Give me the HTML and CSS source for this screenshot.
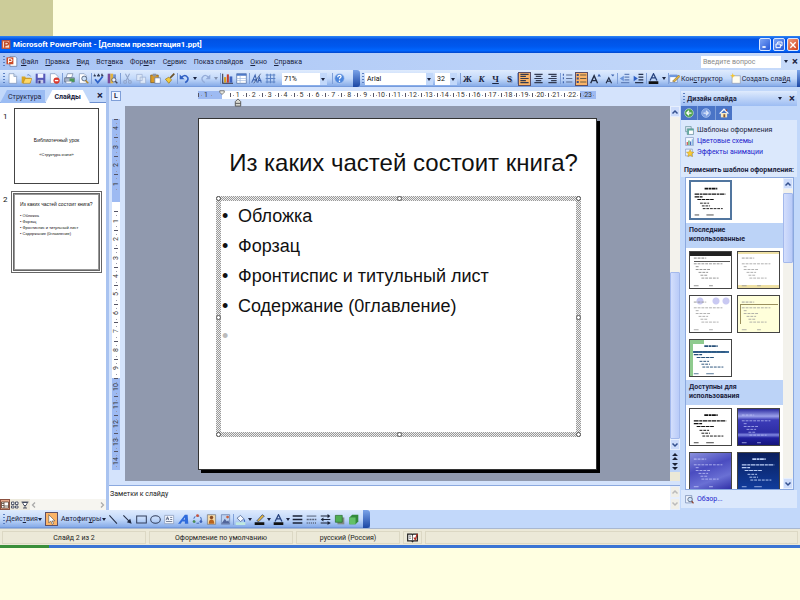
FILE: index.html
```html
<!DOCTYPE html>
<html lang="ru">
<head>
<meta charset="utf-8">
<title>Microsoft PowerPoint - [Делаем презентация1.ppt]</title>
<link rel="stylesheet" href="styles.css">
</head>
<body>
<svg class="defs" aria-hidden="true">
  <defs>
    <symbol id="i-new" viewBox="0 0 16 16"><path d="M3 1h7l4 4v10H3z" fill="#fff" stroke="#7d93b8"/><path d="M10 1v4h4" fill="#cfdcf0" stroke="#7d93b8"/></symbol>
    <symbol id="i-open" viewBox="0 0 16 16"><path d="M1 5h5l1 2h7v8H1z" fill="#d9a520"/><path d="M3 15l3-7h10l-3 7z" fill="#ffd968" stroke="#a87c14" stroke-width=".7"/><path d="M9 3q3-2 5 2" stroke="#456bb5" fill="none"/></symbol>
    <symbol id="i-save" viewBox="0 0 16 16"><path d="M1 1h14v14H1z" fill="#5558b8"/><path d="M4 1h8v6H4z" fill="#f2f4ff"/><path d="M4 10h8v5H4z" fill="#c5c9e8"/><path d="M5 11h3v4H5z" fill="#39397d"/></symbol>
    <symbol id="i-perm" viewBox="0 0 16 16"><path d="M2 1h7l4 4v10H2z" fill="#fff" stroke="#7d93b8"/><circle cx="11" cy="11" r="4.5" fill="#d9372b"/><path d="M8.500 10h5v2h-5z" fill="#fff"/></symbol>
    <symbol id="i-print" viewBox="0 0 16 16"><path d="M5 1h8l-2 6H3z" fill="#fff" stroke="#6b7d9c"/><path d="M1 7h14v6H1z" fill="#a9b5c9" stroke="#53617c"/><path d="M8 8h7v5H8z" fill="#4b9a55"/><path d="M3 12h8v3H3z" fill="#fff" stroke="#6b7d9c" stroke-width=".6"/></symbol>
    <symbol id="i-preview" viewBox="0 0 16 16"><path d="M2 1h7l3 3v11H2z" fill="#fff" stroke="#7d93b8"/><circle cx="9" cy="8" r="3.500" fill="#cfe4fa" stroke="#44546e" stroke-width="1.200"/><path d="M11 11l4 4" stroke="#b58522" stroke-width="2"/></symbol>
    <symbol id="i-spell" viewBox="0 0 16 16"><path d="M1 4h3M6 4h4M12 4h3M2 2h1M7 2h2M12 2h2" stroke="#333c55" stroke-width="2"/><path d="M3 9l4 5 7-9" fill="none" stroke="#2f63c9" stroke-width="2.500"/></symbol>
    <symbol id="i-research" viewBox="0 0 16 16"><path d="M1 1h4v14H1z" fill="#7c4a9a"/><path d="M5 1h4v14H5z" fill="#e0b440"/><path d="M9 2h4v9H9z" fill="#6e8fd0"/><circle cx="10" cy="10" r="3" fill="#e8f2ff" stroke="#445"/><path d="M12 12l3 3" stroke="#445" stroke-width="2"/></symbol>
    <symbol id="i-cut" viewBox="0 0 16 16"><path d="M5 1l5 10M11 1L6 11" stroke="#8fa3c8" stroke-width="1.500"/><circle cx="4.500" cy="13" r="2" fill="none" stroke="#8fa3c8" stroke-width="1.500"/><circle cx="11.500" cy="13" r="2" fill="none" stroke="#8fa3c8" stroke-width="1.500"/></symbol>
    <symbol id="i-copy" viewBox="0 0 16 16"><path d="M1 2h8v9H1zM6 6h8v9H6z" fill="#dde8f8" stroke="#9aaed0"/></symbol>
    <symbol id="i-paste" viewBox="0 0 16 16"><path d="M1 3h11v11H1z" fill="#d99a27" stroke="#80570f"/><path d="M4 1h5v4H4z" fill="#8c94a5"/><path d="M7 7h8v8H7z" fill="#fff" stroke="#5a76b0"/></symbol>
    <symbol id="i-brush" viewBox="0 0 16 16"><path d="M15 1l-6 6" stroke="#6b532a" stroke-width="2.500"/><path d="M2 9l5-3 4 4-4 5z" fill="#f2c93b" stroke="#977517"/></symbol>
    <symbol id="i-undo" viewBox="0 0 16 16"><path d="M3 7q6-7 10 0 1 4-4 7" fill="none" stroke="#2f5fc4" stroke-width="2.200"/><path d="M1 2v7h7z" fill="#2f5fc4"/></symbol>
    <symbol id="i-redo" viewBox="0 0 16 16"><path d="M13 7q-6-7-10 0-1 4 4 7" fill="none" stroke="#93abd8" stroke-width="2"/><path d="M15 2v7H8z" fill="#93abd8"/></symbol>
    <symbol id="i-chart" viewBox="0 0 16 16"><path d="M1 1v14h15" stroke="#334" fill="none" stroke-width="1.500"/><path d="M3 6h3v8H3z" fill="#d8a11e"/><path d="M7 2h3v12H7z" fill="#c63c2e"/><path d="M11 5h4v9h-4z" fill="#3f62bd"/></symbol>
    <symbol id="i-table" viewBox="0 0 16 16"><path d="M1 1h14v14H1z" fill="#fff" stroke="#49679f"/><path d="M1 1h14v3H1z" fill="#4e79c7"/><path d="M1 8h14M1 11h14M6 4v11" stroke="#9fb8df"/></symbol>
    <symbol id="i-expand" viewBox="0 0 16 16"><path d="M1 14L6 3l3 11M3 10h5" fill="none" stroke="#3b61ad" stroke-width="1.500"/><path d="M14 1L4 15" stroke="#2b3e66"/><path d="M10 14l2-8 3 8M10 11h5" fill="none" stroke="#3b61ad" stroke-width="1.500"/></symbol>
    <symbol id="i-grid" viewBox="0 0 16 16"><path d="M1 3h14M1 8h14M1 13h14M3 1v14M8 1v14M13 1v14" stroke="#5d84c6" stroke-width="1.500"/></symbol>
    <symbol id="i-help" viewBox="0 0 16 16"><circle cx="8" cy="8" r="7" fill="#4c86dd" stroke="#b7cdf0"/><path d="M5.500 6q0-3 3-2.500 3 1 1 3-1.500 1-1.500 2.500M8 11v2" fill="none" stroke="#fff" stroke-width="1.800"/></symbol>
    <symbol id="i-left" viewBox="0 0 16 16"><path d="M2 2h12M2 5h8M2 8h12M2 11h8M2 14h12" stroke="#333b52" stroke-width="1.700"/></symbol>
    <symbol id="i-center" viewBox="0 0 16 16"><path d="M2 2h12M4 5h8M2 8h12M4 11h8M2 14h12" stroke="#333b52" stroke-width="1.700"/></symbol>
    <symbol id="i-right" viewBox="0 0 16 16"><path d="M2 2h12M6 5h8M2 8h12M6 11h8M2 14h12" stroke="#333b52" stroke-width="1.700"/></symbol>
    <symbol id="i-num" viewBox="0 0 16 16"><path d="M2 1v3M2 6v3M2 12v3" stroke="#3b61ad" stroke-width="1.600"/><path d="M6 3h9M6 8h9M6 13h9" stroke="#5c6f94" stroke-width="1.500"/></symbol>
    <symbol id="i-bul" viewBox="0 0 16 16"><path d="M1 3h3M1 8h3M1 13h3" stroke="#394c86" stroke-width="3"/><path d="M6 3h9M6 8h9M6 13h9" stroke="#6d5c43" stroke-width="1.500"/></symbol>
    <symbol id="i-big" viewBox="0 0 16 16"><path d="M1 15L6 4l5 11M3 11h6" fill="none" stroke="#222c44" stroke-width="2"/><path d="M11 5l2-4 3 4z" fill="#3b61ad"/></symbol>
    <symbol id="i-small" viewBox="0 0 16 16"><path d="M3 15l4-8 4 8M4 12h6" fill="none" stroke="#222c44" stroke-width="1.700"/><path d="M10 2h5l-2 3z" fill="#3b61ad"/></symbol>
    <symbol id="i-outdent" viewBox="0 0 16 16"><path d="M8 2h7M8 6h7M8 10h7M3 14h12" stroke="#6482bb" stroke-width="1.500"/><path d="M7 4v8L1 8z" fill="#6a93da"/></symbol>
    <symbol id="i-indent" viewBox="0 0 16 16"><path d="M8 2h7M8 6h7M8 10h7M3 14h12" stroke="#26324e" stroke-width="1.600"/><path d="M1 4v8l6-4z" fill="#2f5fc4"/></symbol>
    <symbol id="i-color" viewBox="0 0 16 16"><path d="M3 11L8 1l5 10M5 7h6" fill="none" stroke="#27427d" stroke-width="1.800"/><path d="M1 12h14v4H1z" fill="#111"/></symbol>
    <symbol id="i-design" viewBox="0 0 16 16"><path d="M1 3h11v11H1z" fill="#fff" stroke="#5c80c4"/><path d="M1 3h11v3H1z" fill="#6c96df"/><path d="M5 12L14 3l2 2-8 8z" fill="#e6b63d" stroke="#55503c" stroke-width=".7"/></symbol>
    <symbol id="i-slide" viewBox="0 0 16 16"><path d="M3 4h12v11H3z" fill="#fffdf0" stroke="#8a97b5"/><path d="M4 0l1 3 3 1-3 1-1 3-1-3-3-1 3-1z" fill="#f5c52c"/></symbol>
    <symbol id="i-app" viewBox="0 0 16 16"><path d="M1 1h14v14H1z" fill="#d2542a"/><path d="M3 3h10v10H3z" fill="#f7dccb"/><path d="M6 13V4h3q3 0 3 2.500T9 9H6" fill="none" stroke="#b93b17" stroke-width="2"/></symbol>
    <symbol id="i-doc" viewBox="0 0 16 16"><path d="M5 1h8l2 2v12H5z" fill="#fff" stroke="#5a6d94"/><path d="M0 2h10v10H0z" fill="#cc4b27"/><path d="M3 11V4h2q3 0 3 2T5 8H3" fill="none" stroke="#fff" stroke-width="1.500"/></symbol>
    <symbol id="i-cursor" viewBox="0 0 16 16"><path d="M4 1v12l3-3 2 5 2-1-2-4h4z" fill="#fff" stroke="#444" stroke-width=".8"/></symbol>
    <symbol id="i-line" viewBox="0 0 16 16"><path d="M2 2l11 12" stroke="#222c44" stroke-width="1.500"/></symbol>
    <symbol id="i-arrow" viewBox="0 0 16 16"><path d="M2 2l9 9" stroke="#222c44" stroke-width="1.500"/><path d="M14 14l-7-2 5-5z" fill="#222c44"/></symbol>
    <symbol id="i-rect" viewBox="0 0 16 16"><path d="M1 3h14v10H1z" fill="none" stroke="#333f5c" stroke-width="1.500"/></symbol>
    <symbol id="i-oval" viewBox="0 0 16 16"><ellipse cx="8" cy="8" rx="7" ry="5.500" fill="none" stroke="#333f5c" stroke-width="1.500"/></symbol>
    <symbol id="i-textbox" viewBox="0 0 16 16"><path d="M1 2h13v12H1z" fill="#f5f8ff" stroke="#8494b5"/><path d="M3 9l2-5 2 5M4 7h3M9 5h3M9 8h3M3 11h9" fill="none" stroke="#384768"/></symbol>
    <symbol id="i-wordart" viewBox="0 0 16 16"><path d="M0 14L10 1h4l1 13h-5v-3H6l-2 3z" fill="#2f6bdc"/><path d="M8 8h2V5z" fill="#dce8fc"/></symbol>
    <symbol id="i-diagram" viewBox="0 0 16 16"><circle cx="8" cy="8" r="5.500" fill="none" stroke="#4a6fb8" stroke-width="1.500" stroke-dasharray="4 2"/><circle cx="8" cy="2.500" r="2" fill="#c7523b"/><circle cx="3" cy="11" r="2" fill="#4a8f52"/><circle cx="13" cy="11" r="2" fill="#3d61b5"/></symbol>
    <symbol id="i-clip" viewBox="0 0 16 16"><path d="M2 1h12v14H2z" fill="#f4d9a7" stroke="#6b727f"/><circle cx="8" cy="5" r="2.500" fill="#8a4c23"/><path d="M4 14q0-6 4-6t4 6z" fill="#b8641f"/></symbol>
    <symbol id="i-pic" viewBox="0 0 16 16"><path d="M2 1h12v14H2z" fill="#bcd2f2" stroke="#6278a6"/><path d="M2 14l5-7 3 4 2-2 2 5z" fill="#51659b"/><circle cx="11" cy="4.500" r="2" fill="#c8603e"/></symbol>
    <symbol id="i-fill" viewBox="0 0 16 16"><path d="M3 6l5-4 5 5-5 4z" fill="#f4f8ff" stroke="#3c5180"/><path d="M13 7q3 3 1 5-2-1-1-5" fill="#3769c4"/><path d="M1 12h14v4H1z" fill="#bfe8e0"/></symbol>
    <symbol id="i-pen" viewBox="0 0 16 16"><path d="M4 10L12 1l3 2-8 8z" fill="#e6b63d" stroke="#2e4170"/><path d="M1 12h14v4H1z" fill="#111"/></symbol>
    <symbol id="i-weight" viewBox="0 0 16 16"><path d="M1 3h14M1 8h14M1 13h14" stroke="#1a2236" stroke-width="2.200"/></symbol>
    <symbol id="i-dash" viewBox="0 0 16 16"><path d="M1 3h14" stroke="#58637a" stroke-width="1.500"/><path d="M1 8h14" stroke="#58637a" stroke-width="2" stroke-dasharray="3 1"/><path d="M1 13h14" stroke="#58637a" stroke-width="2" stroke-dasharray="1.500 1.500"/></symbol>
    <symbol id="i-arrows" viewBox="0 0 16 16"><path d="M1 3h12M3 8h12M1 13h14" stroke="#1a2236" stroke-width="1.500"/><path d="M11 0l4 3-4 3zM5 5L1 8l4 3zM11 10l4 3-4 3z" fill="#1a2236"/></symbol>
    <symbol id="i-shadow" viewBox="0 0 16 16"><path d="M5 5h10v10H5z" fill="#7f8a86"/><path d="M2 2h10v10H2z" fill="#4fae52" stroke="#27682c"/></symbol>
    <symbol id="i-cube" viewBox="0 0 16 16"><path d="M2 5l4-4h9v10l-4 4H2z" fill="#338a3b"/><path d="M2 5h9v10H2z" fill="#63c167"/></symbol>
    <symbol id="i-home" viewBox="0 0 16 16"><path d="M3 8h10v7H3z" fill="#f7e7c2"/><path d="M1 9l7-7 7 7" fill="none" stroke="#fff" stroke-width="2"/><path d="M11 2h2v3h-2z" fill="#b54b31"/><path d="M7 10h3v5H7z" fill="#8d5a2a"/></symbol>
    <symbol id="i-back" viewBox="0 0 16 16"><circle cx="8" cy="8" r="7" fill="#4fa350" stroke="#cfe4d5"/><path d="M12 8H5M8 4.500L4.500 8 8 11.500" fill="none" stroke="#fff" stroke-width="2"/></symbol>
    <symbol id="i-fwd" viewBox="0 0 16 16"><circle cx="8" cy="8" r="7" fill="#7ea0e2" stroke="#b8cdf3"/><path d="M4 8h7M8 4.500L11.500 8 8 11.500" fill="none" stroke="#dfe9fb" stroke-width="2"/></symbol>
    <symbol id="i-tpl" viewBox="0 0 16 16"><path d="M1 1h10v9H1z" fill="#dceaf5" stroke="#4c7d86"/><path d="M4 5h11v10H4z" fill="#fff" stroke="#3d6e80"/><path d="M4 5h11v3H4zM4 8h3v7H4z" fill="#5fa79c"/></symbol>
    <symbol id="i-scheme" viewBox="0 0 16 16"><path d="M1 1h14v14H1z" fill="#f4f8ff" stroke="#6c87b8"/><path d="M3 9h2v5H3z" fill="#c9433a"/><path d="M6 6h2v8H6z" fill="#3e9e55"/><path d="M9 8h2v6H9z" fill="#3f62bd"/><path d="M12 4h2v10h-2z" fill="#7bb4de"/></symbol>
    <symbol id="i-anim" viewBox="0 0 16 16"><path d="M1 2h12v12H1z" fill="#e9f1fd" stroke="#6c87b8"/><path d="M9 3l2 4 5 .5-4 3 1.500 5L9 13l-4 2.500L6 10.500 2.500 7.500 7 7z" fill="#f8cb36" stroke="#a87d14" stroke-width=".7"/></symbol>
    <symbol id="i-browse" viewBox="0 0 16 16"><path d="M1 1h11v13H1z" fill="#eef4ff" stroke="#56709f"/><circle cx="9" cy="8" r="4" fill="#cfe4fa" stroke="#44546e" stroke-width="1.300"/><path d="M12 11l3 4" stroke="#8c3d2a" stroke-width="2.200"/></symbol>
    <symbol id="i-book" viewBox="0 0 16 16"><path d="M1 3h6l1 1 1-1h6v10H9l-1 1-1-1H1z" fill="#fff" stroke="#222" stroke-width="1.800"/><path d="M8 4v9M3 6h3M3 9h3" stroke="#333"/><path d="M10 8l2 3 3-8" fill="none" stroke="#b52d20" stroke-width="1.800"/></symbol>
    <symbol id="i-vnormal" viewBox="0 0 16 16"><path d="M1 2h14v12H1z" fill="#fff" stroke="#50382a" stroke-width="1.500"/><path d="M6 2v12M2 5h4M2 9h4M6 10h9" stroke="#50382a" stroke-width="1.500"/></symbol>
    <symbol id="i-vsort" viewBox="0 0 16 16"><path d="M1 2h5v5H1zM9 2h5v5H9zM1 10h5v4H1zM9 10h5v4H9z" fill="#fff" stroke="#222c44" stroke-width="1.500"/></symbol>
    <symbol id="i-vshow" viewBox="0 0 16 16"><path d="M1 2h14M3 3h10l-3 6H6z" fill="#fff" stroke="#222c44" stroke-width="1.500"/><path d="M8 9v5M4 14h8" stroke="#222c44" stroke-width="1.500"/></symbol>
    <symbol id="i-up" viewBox="0 0 8 8"><path d="M1.500 5.500L4 3l2.500 2.500" fill="none" stroke="currentColor" stroke-width="1.500"/></symbol>
    <symbol id="i-down" viewBox="0 0 8 8"><path d="M1.500 2.500L4 5l2.500-2.500" fill="none" stroke="currentColor" stroke-width="1.500"/></symbol>
    <symbol id="i-prev" viewBox="0 0 8 8"><path d="M1 4l3-3 3 3zM1 8l3-3 3 3z" fill="#1a2236"/></symbol>
    <symbol id="i-next" viewBox="0 0 8 8"><path d="M1 0l3 3 3-3zM1 4l3 3 3-3z" fill="#1a2236"/></symbol>
    <symbol id="i-lt" viewBox="0 0 8 8"><path d="M5 1.500L2.500 4 5 6.500" fill="none" stroke="currentColor" stroke-width="1.300"/></symbol>
    <symbol id="i-gt" viewBox="0 0 8 8"><path d="M3 1.500L5.500 4 3 6.500" fill="none" stroke="currentColor" stroke-width="1.300"/></symbol>
    <symbol id="t-text" viewBox="0 0 43 37"><path d="M15 6h14" stroke="currentColor" stroke-width="2" stroke-dasharray="4 .6 3 .5"/><path d="M4 12h34M4 15h9" stroke="currentColor" stroke-width="1.400" stroke-dasharray="5 .7 3 .6"/><path d="M7 18h18" stroke="currentColor" stroke-width="1.200" stroke-dasharray="4 .7"/><path d="M10 22h10M12 25h9M13 28h22" stroke="currentColor" stroke-dasharray="3 1"/><path d="M4 35h5M17 35h8" stroke="currentColor" stroke-width=".8"/></symbol>
    <symbol id="t-lines" viewBox="0 0 43 37"><path d="M4 6h13" stroke="currentColor" stroke-dasharray="3 1"/><path d="M4 12h30M6 15h4M6 18h16M9 21h10M11 24h8M12 27h18" stroke="currentColor" stroke-width=".8" stroke-dasharray="3 1"/><path d="M4 35h5M20 35h4" stroke="currentColor" stroke-width=".8"/></symbol>
  </defs>
</svg>

<header class="banner"><div class="banner-block"></div></header>

<main class="app">
  <div class="titlebar">
    <svg class="icon"><use href="#i-app"/></svg>
    <h1>Microsoft PowerPoint - [Делаем презентация1.ppt]</h1>
    <button class="win" aria-label="Свернуть"><svg viewBox="0 0 12 12"><path d="M2 9h5" stroke="#fff" stroke-width="2.500"/></svg></button>
    <button class="win" aria-label="Восстановить"><svg viewBox="0 0 12 12"><path d="M4 4V1.500h6.500V7H8M1.500 4.500H8V10H1.500z" fill="none" stroke="#fff" stroke-width="1.500"/></svg></button>
    <button class="win close" aria-label="Закрыть"><svg viewBox="0 0 12 12"><path d="M2 2l8 8M10 2l-8 8" stroke="#fff" stroke-width="2"/></svg></button>
  </div>

  <nav class="menubar">
    <span class="grip"></span>
    <svg class="icon"><use href="#i-doc"/></svg>
    <button><u>Ф</u>айл</button><button><u>П</u>равка</button><button><u>В</u>ид</button><button>Вст<u>а</u>вка</button><button>Фор<u>м</u>ат</button><button>С<u>е</u>рвис</button><button>Показ слай<u>д</u>ов</button><button><u>О</u>кно</button><button><u>С</u>правка</button>
    <input class="ask" type="text" placeholder="Введите вопрос" aria-label="Введите вопрос">
    <span class="caret"></span>
    <button class="x" aria-label="Закрыть окно">×</button>
  </nav>

  <div class="toolbars">
    <div class="toolbar standard">
      <span class="grip"></span>
      <button class="tb" aria-label="Создать"><svg><use href="#i-new"/></svg></button>
      <button class="tb" aria-label="Открыть"><svg><use href="#i-open"/></svg></button>
      <button class="tb" aria-label="Сохранить"><svg><use href="#i-save"/></svg></button>
      <button class="tb" aria-label="Разрешения"><svg><use href="#i-perm"/></svg></button>
      <i class="sep"></i>
      <button class="tb" aria-label="Печать"><svg><use href="#i-print"/></svg></button>
      <button class="tb" aria-label="Просмотр"><svg><use href="#i-preview"/></svg></button>
      <i class="sep"></i>
      <button class="tb" aria-label="Орфография"><svg><use href="#i-spell"/></svg></button>
      <button class="tb" aria-label="Справочники"><svg><use href="#i-research"/></svg></button>
      <i class="sep"></i>
      <button class="tb" aria-label="Вырезать"><svg><use href="#i-cut"/></svg></button>
      <button class="tb" aria-label="Копировать"><svg><use href="#i-copy"/></svg></button>
      <button class="tb" aria-label="Вставить"><svg><use href="#i-paste"/></svg></button>
      <button class="tb" aria-label="Формат по образцу"><svg><use href="#i-brush"/></svg></button>
      <i class="sep"></i>
      <button class="tb" aria-label="Отменить"><svg><use href="#i-undo"/></svg></button><span class="caret"></span>
      <button class="tb" aria-label="Вернуть"><svg><use href="#i-redo"/></svg></button><span class="caret dim"></span>
      <i class="sep"></i>
      <button class="tb" aria-label="Диаграмма"><svg><use href="#i-chart"/></svg></button>
      <button class="tb" aria-label="Таблица"><svg><use href="#i-table"/></svg></button>
      <i class="sep"></i>
      <button class="tb" aria-label="Развернуть все"><svg><use href="#i-expand"/></svg></button>
      <button class="tb" aria-label="Сетка"><svg><use href="#i-grid"/></svg></button>
      <span class="combo zoom"><select aria-label="Масштаб"><option>71%</option></select></span>
      <i class="sep"></i>
      <button class="tb" aria-label="Справка"><svg><use href="#i-help"/></svg></button>
      <span class="cap"></span>
    </div>
    <div class="toolbar format">
      <span class="grip"></span>
      <span class="combo font"><select aria-label="Шрифт"><option>Arial</option></select></span>
      <span class="combo size"><select aria-label="Размер шрифта"><option>32</option></select></span>
      <i class="sep"></i>
      <button class="tb letter b">Ж</button><button class="tb letter i">К</button><button class="tb letter u">Ч</button><button class="tb letter s">S</button>
      <i class="sep"></i>
      <button class="tb on" aria-label="По левому краю"><svg><use href="#i-left"/></svg></button>
      <button class="tb" aria-label="По центру"><svg><use href="#i-center"/></svg></button>
      <button class="tb" aria-label="По правому краю"><svg><use href="#i-right"/></svg></button>
      <i class="sep"></i>
      <button class="tb" aria-label="Нумерация"><svg><use href="#i-num"/></svg></button>
      <button class="tb on" aria-label="Маркеры"><svg><use href="#i-bul"/></svg></button>
      <button class="tb" aria-label="Увеличить шрифт"><svg><use href="#i-big"/></svg></button>
      <button class="tb" aria-label="Уменьшить шрифт"><svg><use href="#i-small"/></svg></button>
      <i class="sep"></i>
      <button class="tb" aria-label="Уменьшить отступ"><svg><use href="#i-outdent"/></svg></button>
      <button class="tb" aria-label="Увеличить отступ"><svg><use href="#i-indent"/></svg></button>
      <i class="sep"></i>
      <button class="tb" aria-label="Цвет шрифта"><svg><use href="#i-color"/></svg></button><span class="caret"></span>
      <i class="sep"></i>
      <button class="tb wide"><svg><use href="#i-design"/></svg><span>Кон<u>с</u>труктор</span></button>
      <button class="tb wide"><svg><use href="#i-slide"/></svg><span>Создать сла<u>й</u>д</span></button>
      <span class="cap"></span>
    </div>
  </div>

  <div class="workspace">
    <aside class="outline">
      <div class="tabs">
        <button class="tab">Структура</button><button class="tab active">Слайды</button>
        <button class="x" aria-label="Закрыть панель">×</button>
      </div>
      <ol class="slides">
        <li><span class="num">1</span><div class="mini"><h3 class="center">Библиотечный урок</h3><p>«Структура книги»</p></div></li>
        <li class="current"><span class="num">2</span><div class="mini"><h3>Из каких частей состоит книга?</h3>
          <ul><li>Обложка</li><li>Форзац</li><li>Фронтиспис и титульный лист</li><li>Содержание (0главление)</li></ul></div></li>
      </ol>
      <div class="views">
        <button class="on" aria-label="Обычный"><svg><use href="#i-vnormal"/></svg></button>
        <button aria-label="Сортировщик"><svg><use href="#i-vsort"/></svg></button>
        <button aria-label="Показ слайдов"><svg><use href="#i-vshow"/></svg></button>
        <div class="hscroll"><svg><use href="#i-lt"/></svg><svg><use href="#i-gt"/></svg></div>
      </div>
    </aside>

    <section class="editor">
      <div class="hruler">
        <span class="tabstop">L</span>
        <div class="hscale">
          <span class="out">1</span><span class="zero"><svg class="marker" viewBox="0 0 8 16"><path d="M1 1h6v2L4 6 1 3z" fill="#e8e8e0" stroke="#555"/></svg></span><span>1<svg class="marker low" viewBox="0 0 8 10"><path d="M1 4l3-3 3 3v5H1zM1 6h6" fill="#d8d8d0" stroke="#555"/></svg></span><span>2</span><span>3</span><span>4</span><span>5</span><span>6</span><span>7</span><span>8</span><span>9</span><span>10</span><span>11</span><span>12</span><span>13</span><span>14</span><span>15</span><span>16</span><span>17</span><span>18</span><span>19</span><span>20</span><span>21</span><span>22</span><span class="out">23</span>
        </div>
      </div>
      <div class="stage">
        <div class="vruler">
          <div class="vscale">
            <span class="out"><b>4</b></span><span class="out"><b>3</b></span><span class="out"><b>2</b></span><span class="out"><b>1</b></span><span class="zero"></span><span><b>1</b></span><span><b>2</b></span><span><b>3</b></span><span><b>4</b></span><span><b>5</b></span><span><b>6</b></span><span><b>7</b></span><span><b>8</b></span><span><b>9</b></span><span class="out"><b>10</b></span><span class="out"><b>11</b></span><span class="out"><b>12</b></span><span class="out"><b>13</b></span><span class="out"><b>14</b></span>
          </div>
        </div>
        <div class="canvas">
          <article class="slide">
            <h2>Из каких частей состоит книга?</h2>
            <div class="box">
              <ul>
                <li>Обложка</li><li>Форзац</li><li>Фронтиспис и титульный лист</li><li>Содержание (0главление)</li><li class="empty"></li>
              </ul>
              <i class="h tl"></i><i class="h tc"></i><i class="h tr"></i><i class="h ml"></i><i class="h mr"></i><i class="h bl"></i><i class="h bc"></i><i class="h br"></i>
            </div>
          </article>
        </div>
        <div class="vscroll main">
          <button aria-label="Вверх"><svg><use href="#i-up"/></svg></button>
          <div class="track"><div class="thumb"></div></div>
          <button aria-label="Вниз"><svg><use href="#i-down"/></svg></button>
          <button class="jump" aria-label="Предыдущий слайд"><svg><use href="#i-prev"/></svg></button>
          <button class="jump" aria-label="Следующий слайд"><svg><use href="#i-next"/></svg></button>
          <div class="corner"></div>
        </div>
      </div>
      <div class="notes">
        <p>Заметки к слайду</p>
        <div class="vscroll off"><button aria-label="Вверх"><svg><use href="#i-up"/></svg></button><button aria-label="Вниз"><svg><use href="#i-down"/></svg></button></div>
      </div>
    </section>

    <aside class="design">
      <div class="design-head"><span class="grip"></span><h2>Дизайн слайда</h2><span class="caret"></span><button class="x" aria-label="Закрыть область">×</button></div>
      <div class="design-nav"><button aria-label="Назад"><svg><use href="#i-back"/></svg></button><button aria-label="Вперёд"><svg><use href="#i-fwd"/></svg></button><button aria-label="Домой"><svg><use href="#i-home"/></svg></button></div>
      <ul class="links">
        <li><svg><use href="#i-tpl"/></svg><span>Шаблоны оформления</span></li>
        <li><svg><use href="#i-scheme"/></svg><a href="#">Цветовые схемы</a></li>
        <li><svg><use href="#i-anim"/></svg><a href="#">Эффекты анимации</a></li>
      </ul>
      <h3 class="apply">Применить шаблон оформления:</h3>
      <div class="gallery">
        <div class="items">
          <div class="row first"><svg class="th sel"><use href="#t-text"/></svg></div>
          <h4>Последние использованные</h4>
          <div class="row"><svg class="th dark"><use href="#t-lines"/></svg><svg class="th sand"><use href="#t-lines"/></svg></div>
          <div class="row"><svg class="th dots"><use href="#t-lines"/></svg><svg class="th cream"><use href="#t-lines"/></svg></div>
          <div class="row"><svg class="th green"><use href="#t-text"/></svg></div>
          <h4>Доступны для использования</h4>
          <div class="row"><svg class="th"><use href="#t-text"/></svg><svg class="th sea"><use href="#t-lines"/></svg></div>
          <div class="row"><svg class="th violet"><use href="#t-lines"/></svg><svg class="th navy"><use href="#t-text"/></svg></div>
        </div>
        <div class="vscroll"><button aria-label="Вверх"><svg><use href="#i-up"/></svg></button><div class="track"><div class="thumb"></div></div><button aria-label="Вниз"><svg><use href="#i-down"/></svg></button></div>
      </div>
      <p class="browse"><svg><use href="#i-browse"/></svg><a href="#">Обзор...</a></p>
    </aside>
  </div>

  <div class="toolbars bottom">
    <div class="toolbar draw">
      <span class="grip"></span>
      <button class="tb wide"><span>Дейс<u>т</u>вия</span><span class="caret"></span></button>
      <button class="tb on" aria-label="Выбор объектов"><svg><use href="#i-cursor"/></svg></button>
      <button class="tb wide"><span>Автофиг<u>у</u>ры</span><span class="caret"></span></button>
      <button class="tb" aria-label="Линия"><svg><use href="#i-line"/></svg></button>
      <button class="tb" aria-label="Стрелка"><svg><use href="#i-arrow"/></svg></button>
      <button class="tb" aria-label="Прямоугольник"><svg><use href="#i-rect"/></svg></button>
      <button class="tb" aria-label="Овал"><svg><use href="#i-oval"/></svg></button>
      <button class="tb" aria-label="Надпись"><svg><use href="#i-textbox"/></svg></button>
      <button class="tb" aria-label="WordArt"><svg><use href="#i-wordart"/></svg></button>
      <button class="tb" aria-label="Схема"><svg><use href="#i-diagram"/></svg></button>
      <button class="tb" aria-label="Картинка"><svg><use href="#i-clip"/></svg></button>
      <button class="tb" aria-label="Рисунок"><svg><use href="#i-pic"/></svg></button>
      <i class="sep"></i>
      <button class="tb" aria-label="Цвет заливки"><svg><use href="#i-fill"/></svg></button><span class="caret"></span>
      <button class="tb" aria-label="Цвет линий"><svg><use href="#i-pen"/></svg></button><span class="caret"></span>
      <button class="tb" aria-label="Цвет шрифта"><svg><use href="#i-color"/></svg></button><span class="caret"></span>
      <button class="tb" aria-label="Тип линии"><svg><use href="#i-weight"/></svg></button>
      <button class="tb" aria-label="Тип штриха"><svg><use href="#i-dash"/></svg></button>
      <button class="tb" aria-label="Вид стрелки"><svg><use href="#i-arrows"/></svg></button>
      <button class="tb" aria-label="Тень"><svg><use href="#i-shadow"/></svg></button>
      <button class="tb" aria-label="Объём"><svg><use href="#i-cube"/></svg></button>
      <span class="cap"></span>
    </div>
  </div>

  <footer class="status">
    <span class="wide">Слайд 2 из 2</span><span class="wide">Оформление по умолчанию</span><span class="lang">русский (Россия)</span><span class="book"><svg><use href="#i-book"/></svg></span><span class="rest"></span>
  </footer>
  <div class="taskbar"><div class="start"></div></div>
</main>
</body>
</html>
```
FILE: styles.css
```css
* { box-sizing: border-box; }

:root {
  --ui: Roboto, "Liberation Sans", Arial, sans-serif;
  --slide: "Liberation Sans", Arial, sans-serif;
  --ink: #1b2440;
  --bar: #c2d6f8;
  --ruler-out: #9dbaf2;
}

body {
  margin: 0;
  min-height: 100vh;
  background: #ffffe1;
  font: 7px/10px var(--ui);
  color: var(--ink);
}

.defs { position: absolute; width: 0; height: 0; }

h1, h2, h3, h4, p, ul, ol { margin: 0; padding: 0; font-weight: normal; font-size: inherit; list-style: none; }
button, input, select { font: inherit; color: inherit; border: 0; padding: 0; margin: 0; background: none; }
button { display: inline-flex; align-items: center; justify-content: center; white-space: nowrap; flex: none; }

.banner { height: 36px; }
.banner-block { width: 53px; height: 100%; background: #cccc99; }

.app { display: flex; flex-direction: column; height: calc(100vh - 88px); min-height: 512px; background: var(--bar); }

/* title bar */
.titlebar { display: flex; align-items: center; gap: 2px; height: 17px; flex: none; padding: 0 1px; background: linear-gradient(#2f86f5, #0152e4 20%, #0058ee 60%, #0166ff 85%, #0045cc); color: #fff; }
.titlebar h1 { flex: 1; font-size: 8px; font-weight: bold; line-height: 16px; }
.icon { width: 10px; height: 11px; flex: none; }
.win { width: 12px; height: 13px; border: 1px solid #dbe7ff; border-radius: 2px; background: linear-gradient(135deg, #7da4f5, #2458d8); }
.win svg { width: 8px; height: 8px; }
.win.close { background: linear-gradient(135deg, #f09a7c, #d0401c); }

.grip { width: 2px; height: 11px; flex: none; background: repeating-linear-gradient(#5b7fc2 0 1px, transparent 1px 3px); }
.caret { width: 6px; height: 10px; flex: none; display: inline-flex; align-items: center; justify-content: center; }
.caret::before { content: ""; border: 2px solid transparent; border-top: 3px solid var(--ink); border-bottom: 0; }
.caret.dim { opacity: .4; }
.x { font-size: 11px; line-height: 10px; font-weight: bold; width: 8px; }

/* menu */
.menubar { display: flex; align-items: center; gap: 7px; height: 17px; flex: none; padding: 0 1px 0 3px; background: linear-gradient(90deg, #a8c4f5, #c6dafa); }
.menubar .grip { margin-right: -6px; }
.menubar .icon { width: 12px; margin-right: -4px; }
.ask { margin-left: auto; width: 80px; height: 12px; background: #fff; padding: 0 2px; }
.ask::placeholder { color: #8a8a8a; opacity: 1; }
.ask ~ * { margin-left: -5px; }

/* toolbars */
.toolbars { display: flex; height: 17px; flex: none; background: #c2d8fa; }
.toolbar { display: flex; align-items: center; gap: 1px; padding-left: 3px; background: linear-gradient(#dfebfd, #c3d9fa 50%, #86abe8 95%, #5d84cd); }
.format { flex: 1; padding-left: 2px; }
.tb { width: 13px; height: 14px; }
.tb svg { width: 11px; height: 11px; }
.tb.on { background: #fbb467; border: 1px solid #5c5068; }
.tb.wide { width: auto; gap: 1px; }
.format .wide { margin-right: 6px; }
.sep { width: 1px; height: 11px; flex: none; background: #7f9fd8; margin-right: -1px; }
.cap { width: 7px; align-self: stretch; margin-left: auto; flex: none; border-radius: 0 3px 3px 0; background: linear-gradient(#7aa3e8, #1c47a4); }
.standard .cap { margin-left: 6px; }
.combo { position: relative; height: 12px; flex: none; background: #fff; display: flex; }
.combo select { appearance: none; width: 100%; padding: 0 2px; line-height: 12px; color: #111; }
.combo::after { content: ""; position: absolute; right: 0; top: 0; width: 7px; height: 12px; pointer-events: none; background: #c2d8fa; }
.combo::before { content: ""; position: absolute; z-index: 1; right: 2px; top: 5px; border: 2px solid transparent; border-top: 3px solid var(--ink); border-bottom: 0; pointer-events: none; }
.zoom { width: 45px; margin: 0 4px; }
.font { width: 68px; margin-right: 1px; }
.size { width: 22px; margin-right: 2px; }
.letter { font: bold 9px/12px "Liberation Serif", serif; }
.letter.i { font-style: italic; }
.letter.u { text-decoration: underline; }
.letter.s { text-shadow: 1px 1px #8b98b5; }

/* workspace */
.workspace { display: flex; flex: 1; min-height: 0; }
.outline { width: 106px; flex: none; display: flex; flex-direction: column; background: #fff; }
.tabs { display: flex; height: 16px; padding-top: 3px; background: #c2d8fa; border-bottom: 1px solid #6c8fd0; }
.tab { height: 13px; padding: 0 4px 0 8px; background: #9bbcf3; clip-path: polygon(7px 0, 100% 0, 100% 100%, 0 100%); }
.tab.active { background: #fff; font-weight: bold; padding: 0 9px; clip-path: polygon(7px 0, calc(100% - 7px) 0, 100% 100%, 0 100%); }
.tabs .x { margin-left: auto; margin-right: 2px; }
.slides { flex: 1; padding: 5px 4px 0 3px; display: flex; flex-direction: column; gap: 7px; }
.slides > li { display: grid; grid-template-columns: 8px minmax(0, 1fr); color: #111; }
.num { padding-top: 4px; font-size: 8px; }
.mini { height: 76px; margin: 0 3px; border: 1px solid #444; background: #fff; padding: 8px 5px; line-height: 6px; font-size: 4px; font-weight: bold; font-family: var(--slide); }
.mini h3 { font-size: 5px; font-weight: normal; white-space: nowrap; }
.mini h3.center { padding-top: 20px; text-align: center; }
.mini p { text-align: center; padding-top: 9px; }
.current .mini { height: 82px; margin: 0; border: 3px double #666; outline: 1px solid #999; outline-offset: -4px; padding: 7px 6px; }
.mini ul { padding-top: 6px; }
.mini ul li::before { content: "• "; }
.views { display: flex; height: 11px; flex: none; background: #ece9dc; }
.views button { width: 10px; }
.views button.on { background: #e7a98c; border: 1px solid #8b5140; }
.views button svg { width: 8px; height: 8px; }
.hscroll { flex: 1; display: flex; justify-content: space-between; align-items: center; color: #aaa; background: #f6f5f0; }
.hscroll svg { width: 8px; height: 8px; }

.editor { flex: 1; min-width: 0; display: flex; flex-direction: column; border-left: 3px solid #a9c3f0; background: #d4e3fc; }
.hruler { display: flex; height: 19px; flex: none; padding: 4px 84px 0 2px; }
.tabstop { width: 10px; height: 10px; border: 1px solid #7f9fd8; background: #eef4ff; font-weight: bold; line-height: 8px; text-align: center; }
.hscale { flex: 1; display: flex; height: 8px; margin-left: 77px; background: #fff; }
.hscale span, .vscale span { flex: 1; display: flex; align-items: center; justify-content: center; position: relative; color: #333; line-height: 8px; }
.hscale span { background: linear-gradient(#556, #556) 0 50% / 1px 4px no-repeat, linear-gradient(#99a, #99a) 3px 50% / 1px 1px no-repeat, linear-gradient(#99a, #99a) 13px 50% / 1px 1px no-repeat; }
.hscale .out, .vscale .out { background-color: var(--ruler-out); }
.hscale .zero { background: linear-gradient(90deg, var(--ruler-out) 50%, #fff 50%); }
.marker { position: absolute; left: 4px; top: -1px; width: 8px; height: 12px; }
.marker.low { top: 7px; height: 9px; }

.stage { flex: 1; display: flex; min-height: 0; }
.vruler { width: 16px; flex: none; padding: 13px 5px 11px 3px; display: flex; }
.vscale { flex: 1; display: flex; flex-direction: column; background: #fff; }
.vscale span { background: linear-gradient(#556, #556) 50% 0 / 4px 1px no-repeat, linear-gradient(#99a, #99a) 50% 4px / 1px 1px no-repeat, linear-gradient(#99a, #99a) 50% 15px / 1px 1px no-repeat; min-height: 0; }
.vscale b { font-weight: normal; writing-mode: vertical-rl; transform: rotate(180deg); }
.vscale .zero { background: linear-gradient(var(--ruler-out) 50%, #fff 50%); }

.canvas { flex: 1; min-width: 0; background: #9099ae; padding: 12px 73px 11px; display: flex; }
.slide { flex: 1; min-width: 0; background: #fff; border: 1px solid #333; box-shadow: 3px 3px #000; padding: 27px 15px 32px 17px; display: flex; flex-direction: column; color: #111; font-family: var(--slide); }
.slide h2 { font-size: 24px; line-height: 34px; text-align: center; white-space: nowrap; margin-bottom: 16px; padding-left: 10px; }
.box { position: relative; flex: 1; padding: 5px; background: conic-gradient(#999 25%, #eee 0 50%, #999 0 75%, #eee 0) 0 0 / 2px 2px; }
.box ul { height: 100%; background: #fff; padding: 0 1px; font-size: 18px; line-height: 30px; }
.box li { display: flex; white-space: nowrap; }
.box li::before { content: "•"; width: 16px; flex: none; }
.box .empty::before { color: #bbb; }
.h { position: absolute; width: 5px; height: 5px; border: 1px solid #555; border-radius: 50%; background: #fff; }
.tl, .tc, .tr { top: 0; }
.ml, .mr { top: calc(50% - 2px); }
.bl, .bc, .br { bottom: 0; }
.tl, .ml, .bl { left: 0; }
.tc, .bc { left: calc(50% - 2px); }
.tr, .mr, .br { right: 0; }

.vscroll { width: 10px; flex: none; display: flex; flex-direction: column; background: #f3f2ec; color: #34518f; }
.vscroll button { height: 11px; background: #cddcfb; border: 1px solid #e7effd; }
.vscroll svg { width: 8px; height: 8px; flex: none; }
.track { flex: 1; display: flex; flex-direction: column; }
.thumb { background: linear-gradient(90deg, #d3defc, #b9cbf8); border: 1px solid #a4b9ec; border-radius: 1px; }
.main .thumb { margin-top: auto; height: 52%; }
.main .jump { background: #bdd3f8; border: 0; }
.corner { height: 9px; background: #ebe8d7; }

.notes { display: flex; height: 25px; flex: none; margin-top: 4px; border-top: 1px solid #8ba9df; background: #fff; color: #222; }
.notes p { flex: 1; padding: 3px 1px; }
.vscroll.off { color: #bbb; }
.vscroll.off button { flex: 1; background: #f0efe9; }

/* design pane */
.design { width: 120px; flex: none; display: flex; flex-direction: column; padding: 4px 3px 2px 1px; background: #c2d8fa; }
.design-head { display: flex; align-items: center; gap: 2px; height: 15px; flex: none; padding: 0 1px 0 2px; background: linear-gradient(#dfebfd, #9dbdf3); }
.design-head h2 { flex: 1; font-weight: bold; white-space: nowrap; }
.design-head .caret { margin-right: 3px; }
.design-nav { display: flex; width: 51px; height: 14px; flex: none; background: #4a74c6; }
.design-nav button { flex: 1; }
.design-nav button + button { border-left: 1px solid #7f9fd8; }
.design-nav svg { width: 10px; height: 10px; }
.links { background: #dbe8fc; padding: 5px 4px 7px; }
.links li { display: flex; align-items: center; gap: 3px; line-height: 11px; }
.links svg, .browse svg { width: 9px; height: 9px; flex: none; }
a { color: #2222cc; text-decoration: none; }
.apply { background: #dbe8fc; padding: 0 3px 2px; font-weight: bold; white-space: nowrap; }
.gallery { display: flex; flex: 1; min-height: 0; margin: 0 3px 0 4px; border: 1px solid #8ba9df; }
.items { flex: 1; overflow: hidden; background: #fff; }
.row { display: grid; grid-template-columns: 1fr 1fr; padding: 3px; height: 44px; column-gap: 5px; }
.row.first { height: 45px; padding-top: 2px; }
.items h4 { height: 25px; padding: 3px 30px 3px 3px; background: #bcd3f7; font-weight: bold; line-height: 9px; }
.th { width: 100%; height: 38px; border: 1px solid #444; color: #111; background: #fff; }
.sel { height: 40px; border: 2px solid #51769f; }
.dark { color: #777; background: linear-gradient(#222 4px, transparent 4px), linear-gradient(#555, #555) 4px 9px / 36px 1px no-repeat, #fff; }
.sand { color: #999; background: linear-gradient(#eee0a4 2px, #fff 2px 33px, #eee0a4 33px); }
.dots { color: #999; background: radial-gradient(circle at 26px 5px, #c9c9f2 3px, transparent 4px), radial-gradient(circle at 36px 5px, #c9c9f2 3px, transparent 4px), radial-gradient(circle at 10px 5px, #c9c9f2 3px, transparent 4px), #fff; }
.cream { color: #999; background: linear-gradient(#9a8f5c, #9a8f5c) 2px 8px / 38px 1px no-repeat, linear-gradient(#9a8f5c, #9a8f5c) 2px 8px / 1px 20px no-repeat, #ffffda; }
.green { color: #28517a; background: linear-gradient(#8fcb8f, #8fcb8f) 0 0 / 14px 4px no-repeat, linear-gradient(#3c6d9a, #3c6d9a) 3px 11px / 36px 2px no-repeat, linear-gradient(90deg, #8fcb8f 3px, #fff 3px); }
.sea { color: #b7bdf5; background: linear-gradient(#2a2aa0, #9aa0ea 20%, #3c3cb8 30%, #2e2ea6 65%, #8088e0 72%, #2222a0 80%, #15157c); }
.violet { color: #c5c9fa; background: linear-gradient(160deg, #8a90dc, #4a4cc0 40%, #6a70d4 70%, #3030a8); }
.navy { color: #b9cdf5; background: linear-gradient(#0a1f5e, #103c9c); }
.gallery .thumb { height: 70px; margin-top: 4px; }
.browse { display: flex; align-items: center; gap: 3px; flex: none; padding: 4px 4px; background: #dbe8fc; height: 18px; }

/* bottom bars */
.bottom { height: 18px; }
.draw .caret { width: 5px; margin-left: -1px; }
.draw .cap { margin-left: 2px; }
.draw .on { margin: 0 2px 0 1px; }

.status { display: flex; gap: 3px; height: 17px; flex: none; padding: 2px 2px 1px; background: #ece9d8; border-top: 1px solid #a9b8d0; text-align: center; color: #222; }
.status span { border: 1px solid #dcd8c4; line-height: 12px; }
.status .wide { width: 144px; }
.status .lang { width: 104px; }
.status .book { width: 19px; display: flex; justify-content: center; }
.status svg { width: 11px; height: 11px; }
.status .rest { flex: 1; }
.taskbar { height: 3px; flex: none; background: #3a74d4; }
.start { width: 49px; height: 100%; background: #3a8f3a; }
```
